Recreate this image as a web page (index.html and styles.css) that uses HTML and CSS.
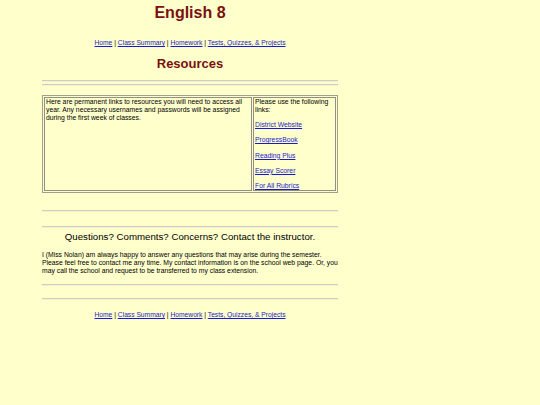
FILE: index.html
```html
<!DOCTYPE html>
<html>
<head>
<meta charset="utf-8">
<link rel="stylesheet" href="styles.css">
</head>
<body>
<div class="page">
  <h1 class="title">English 8</h1>
  <p class="nav"><a href="#">Home</a> | <a href="#">Class Summary</a> | <a href="#">Homework</a> | <a href="#">Tests, Quizzes, &amp; Projects</a></p>
  <h2 class="subtitle">Resources</h2>
  <hr class="rule r1">
  <hr class="rule r2">
  <table class="res">
    <tr>
      <td class="left">Here are permanent links to resources you will need to access all year. Any necessary usernames and passwords will be assigned during the first week of classes.</td>
      <td class="right">
        <p class="intro">Please use the following links:</p>
        <p class="lk"><a href="#">District Website</a></p>
        <p class="lk"><a href="#">ProgressBook</a></p>
        <p class="lk"><a href="#">Reading Plus</a></p>
        <p class="lk"><a href="#">Essay Scorer</a></p>
        <p class="lk last"><a href="#">For All Rubrics</a></p>
      </td>
    </tr>
  </table>
  <hr class="rule r3">
  <hr class="rule r4">
  <h3 class="contact">Questions? Comments? Concerns? Contact the instructor.</h3>
  <p class="para">I (Miss Nolan) am always happy to answer any questions that may arise during the semester. Please feel free to contact me any time. My contact information is on the school web page. Or, you may call the school and request to be transferred to my class extension.</p>
  <hr class="rule r5">
  <hr class="rule r6">
  <p class="nav foot"><a href="#">Home</a> | <a href="#">Class Summary</a> | <a href="#">Homework</a> | <a href="#">Tests, Quizzes, &amp; Projects</a></p>
</div>
</body>
</html>
```
FILE: styles.css
```css
html, body {
  margin: 0;
  padding: 0;
  background: #ffffcc;
}
body {
  font-family: "Liberation Sans", Arial, sans-serif;
  color: #000;
}
.page {
  margin-left: 42px;
  width: 296px;
  padding-top: 3px;
}
.title {
  margin: 0;
  text-align: center;
  font-size: 16px;
  line-height: 19px;
  font-weight: bold;
  color: #7a1010;
}
.nav {
  margin: 16px 0 0;
  text-align: center;
  font-size: 6.7px;
  line-height: 9px;
}
.nav a, .res a {
  color: #1a1acc;
}
.subtitle {
  margin: 9px 0 0;
  text-align: center;
  font-size: 13px;
  line-height: 16px;
  font-weight: bold;
  color: #7a1010;
}
.rule {
  margin: 0;
  height: 0;
  border: 0;
  border-top: 1px solid #cfcfb5;
  border-bottom: 1px solid #f0f0dc;
}
.r1 { margin-top: 8px; }
.r2 { margin-top: 2px; }
.res {
  margin-top: 9px;
  width: 296px;
  border-collapse: separate;
  border-spacing: 1px;
  border: 1px solid #a0a090;
  font-size: 6.8px;
  line-height: 8px;
}
.res td {
  border: 1px solid #909088;
  vertical-align: top;
  padding: 0 1px;
}
.res .left {
  width: 204px;
}
.res p {
  margin: 0;
}
.res .lk {
  margin-top: 7.2px;
}
.r3 { margin-top: 17px; }
.r4 { margin-top: 14px; }
.contact {
  margin: 2px 0 0;
  text-align: center;
  font-size: 9.7px;
  line-height: 13px;
  font-weight: normal;
}
.para {
  margin: 8px 0 0;
  font-size: 6.8px;
  line-height: 8px;
}
.r5 { margin-top: 9px; }
.r6 { margin-top: 12px; }
.foot {
  margin-top: 10px;
}
```
